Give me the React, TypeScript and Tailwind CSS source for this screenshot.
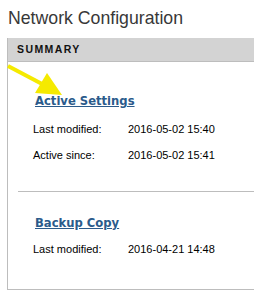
export default function App() {
  return (
    <div
      className="relative w-[254px] h-[302px] overflow-hidden bg-white"
      style={{ fontFamily: '"Liberation Sans", Arial, sans-serif' }}
    >
      <h1 className="ml-2 pt-2 text-[17.7px] leading-[21px] text-[#383838]">Network Configuration</h1>

      <div className="ml-[7px] mt-[9px] w-[300px] border-l border-b border-[#bdbdbd]">
        <div className="h-[24px] border-b border-[#bdbdbd] bg-[#d3d3d3] pl-[9px] flex items-center">
          <span className="text-[10.5px] font-bold tracking-[1.4px] text-[#111]">SUMMARY</span>
        </div>

        <div className="pt-[32px] pb-[29px]">
          <a
            href="#"
            className="block pl-[27px] text-[11.6px] leading-[15px] font-bold text-[#2b5b8b] underline"
            style={{ fontFamily: '"DejaVu Sans", Verdana, sans-serif' }}
          >
            Active Settings
          </a>
          <div className="mt-[14px] pl-[25px] flex text-[11px] leading-[13px] text-black">
            <span className="w-[95px]">Last modified:</span>
            <span>2016-05-02 15:40</span>
          </div>
          <div className="mt-[13px] pl-[25px] flex text-[11px] leading-[13px] text-black">
            <span className="w-[95px]">Active since:</span>
            <span>2016-05-02 15:41</span>
          </div>
        </div>

        <div className="ml-[10px] border-t border-[#bdbdbd]" />

        <div className="pt-[24px] pb-[33px]">
          <a
            href="#"
            className="block pl-[27px] text-[11.6px] leading-[15px] font-bold text-[#2b5b8b] underline"
            style={{ fontFamily: '"DejaVu Sans", Verdana, sans-serif' }}
          >
            Backup Copy
          </a>
          <div className="mt-[12px] pl-[25px] flex text-[11px] leading-[13px] text-black">
            <span className="w-[95px]">Last modified:</span>
            <span>2016-04-21 14:48</span>
          </div>
        </div>
      </div>

      <svg className="absolute left-0 top-0" width="254" height="302" viewBox="0 0 254 302">
        <line x1="8" y1="66" x2="44" y2="85" stroke="#f5ea00" strokeWidth="4" />
        <polygon points="47,73 35,93 62,95" fill="#f5ea00" />
      </svg>
    </div>
  );
}
